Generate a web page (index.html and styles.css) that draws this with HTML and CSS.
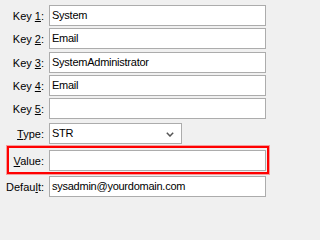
FILE: index.html
```html
<!DOCTYPE html>
<html>
<head>
<meta charset="utf-8">
<link rel="stylesheet" href="styles.css">
</head>
<body>
<div class="form">
  <div class="row r1"><label class="lbl">Key <u>1</u>:</label><div class="field">System</div></div>
  <div class="row r2"><label class="lbl">Key <u>2</u>:</label><div class="field">Email</div></div>
  <div class="row r3"><label class="lbl">Key <u>3</u>:</label><div class="field">SystemAdministrator</div></div>
  <div class="row r4"><label class="lbl">Key <u>4</u>:</label><div class="field">Email</div></div>
  <div class="row r5"><label class="lbl">Key <u>5</u>:</label><div class="field"></div></div>
  <div class="row r6"><label class="lbl"><u>T</u>ype:</label>
    <div class="combo"><span>STR</span>
      <svg class="chev" width="8" height="5" viewBox="0 0 8 5"><path d="M0.8 0.8 L4 4 L7.2 0.8" fill="none" stroke="#555" stroke-width="1.5"/></svg>
    </div>
  </div>
  <div class="highlight">
    <div class="row"><label class="lbl lbl-in"><u>V</u>alue:</label><div class="field field-in"></div></div>
  </div>
  <div class="row r8"><label class="lbl">Defau<u>l</u>t:</label><div class="field">sysadmin@yourdomain.com</div></div>
</div>
</body>
</html>
```

FILE: styles.css
```css
html, body {
  margin: 0;
  padding: 0;
  background: #f0f0f0;
}
body {
  width: 271px;
  height: 203px;
  overflow: hidden;
  font-family: "Liberation Sans", Arial, sans-serif;
  font-size: 11px;
  color: #000;
}
.form {
  padding-top: 5px;
  display: flex;
  flex-direction: column;
}
.row {
  display: flex;
  align-items: center;
  height: 21px;
}
.r1, .r3, .r4 { margin-bottom: 2px; }
.r2 { margin-bottom: 3px; }
.r5 { margin-bottom: 4px; }
.r6 { margin-bottom: 2px; }
.lbl {
  width: 44px;
  margin-right: 5px;
  text-align: right;
  white-space: nowrap;
  flex: none;
}
.lbl u { text-decoration: underline; text-underline-offset: 1px; }
.field {
  box-sizing: border-box;
  width: 217px;
  height: 21px;
  border: 1px solid #acacac;
  background: #fff;
  padding: 0 2px;
  line-height: 19px;
  letter-spacing: -0.25px;
  white-space: nowrap;
  overflow: hidden;
  flex: none;
}
.combo {
  box-sizing: border-box;
  width: 133px;
  height: 21px;
  border: 1px solid #acacac;
  background: #fff;
  padding: 0 2px;
  line-height: 19px;
  letter-spacing: -0.25px;
  display: flex;
  align-items: center;
  justify-content: space-between;
  flex: none;
}
.chev {
  margin-right: 5px;
  margin-top: 1px;
}
.highlight {
  box-sizing: border-box;
  margin-left: 7px;
  width: 262px;
  border: 2px solid #ff0000;
  box-shadow: 0 0 0 1px rgba(255, 0, 0, 0.35);
  padding: 2px 1px 1px 0;
  margin-bottom: 2px;
}
.lbl-in {
  width: 35px;
}
.field-in {
  width: 217px;
}
```
